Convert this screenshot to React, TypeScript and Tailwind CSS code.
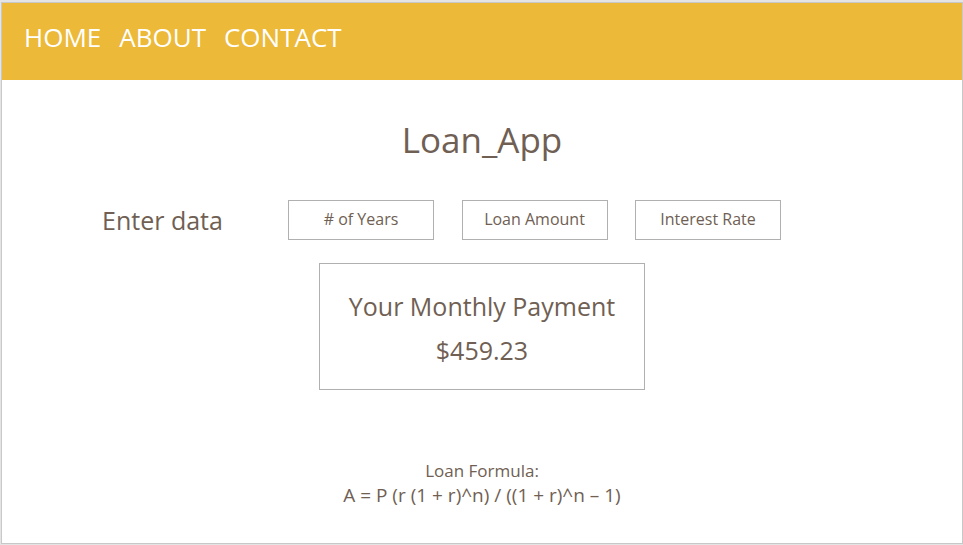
const links = ['HOME', 'ABOUT', 'CONTACT'];
const fields = [
  { id: 'years', label: '# of Years' },
  { id: 'amount', label: 'Loan Amount' },
  { id: 'rate', label: 'Interest Rate' },
];

export default function App() {
  return (
    <div className="min-h-screen bg-[#e4e4e4] pl-px pt-0.5 pb-px flex flex-col font-['Open_Sans','Noto_Sans',sans-serif] text-[#706053]">
      <div className="grow border border-[#c8c8c8] bg-white">
        <header className="h-[77px] bg-[#ecb939] px-[22px] pt-4">
          <nav className="flex gap-[18px] text-[26px] leading-9 text-white">
            {links.map((l) => (
              <a key={l} href="#">{l}</a>
            ))}
          </nav>
        </header>
        <main>
          <h1 className="mt-9 text-center text-[35px] leading-12">Loan_App</h1>
          <form className="mt-9 flex items-center pl-[100px]">
            <h2 className="w-[186px] text-[25px] leading-9">Enter data</h2>
            <div className="flex w-[493px] justify-between">
              {fields.map((f) => (
                <input
                  key={f.id}
                  id={f.id}
                  aria-label={f.label}
                  placeholder={f.label}
                  className="h-10 w-[146px] border border-[#b0b0b0] pb-0.5 text-center text-base placeholder:text-[#706053]"
                />
              ))}
            </div>
          </form>
          <section className="mx-auto mt-[23px] h-[127px] w-[326px] border border-[#b0b0b0] pt-5 text-center text-[25px] leading-11">
            <h2>Your Monthly Payment</h2>
            <output>$459.23</output>
          </section>
          <section className="mt-[68px] text-center text-[17px] leading-[25px]">
            <h2>Loan Formula:</h2>
            <p className="text-[19px] leading-[25px]">A = P (r (1 + r)^n) / ((1 + r)^n – 1)</p>
          </section>
        </main>
      </div>
    </div>
  );
}
